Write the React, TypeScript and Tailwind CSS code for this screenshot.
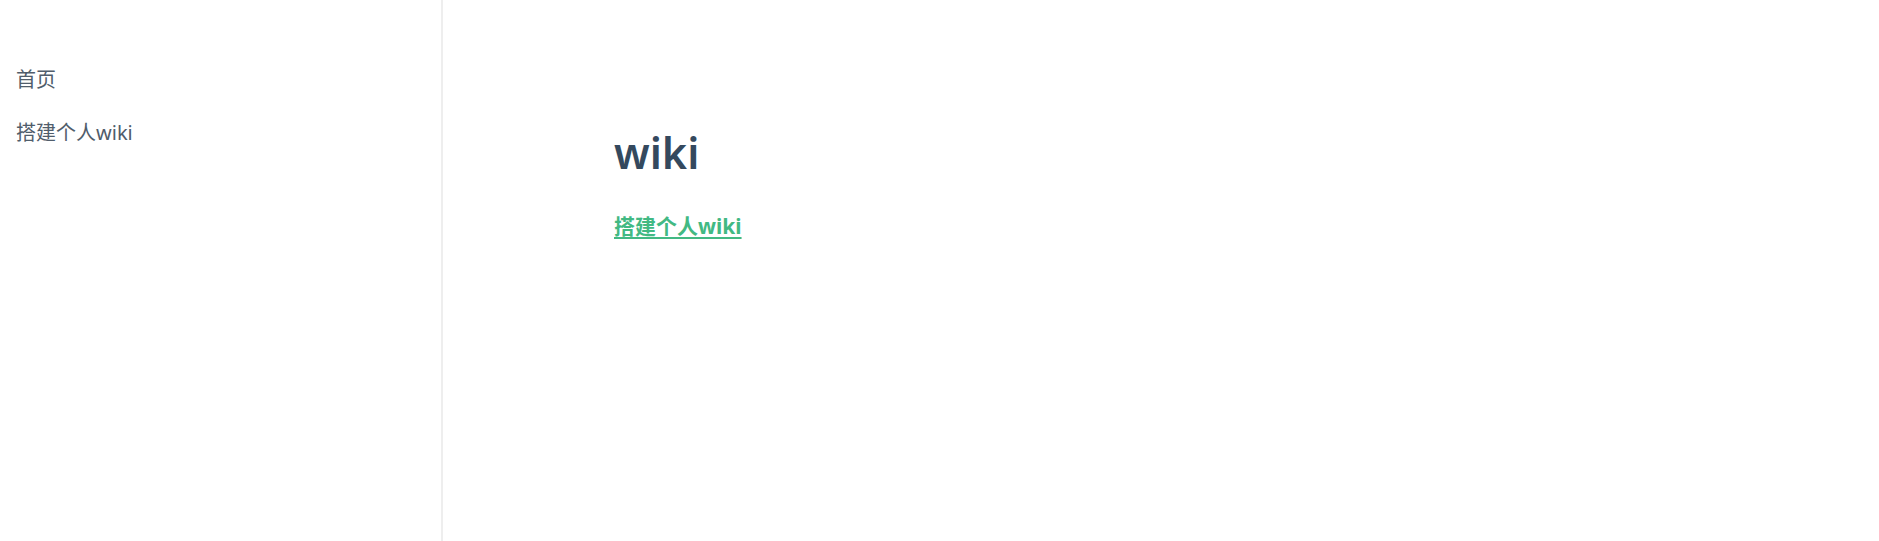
export default function App() {
  const cjk = '"Noto Sans", "Noto Sans CJK SC", sans-serif';
  return (
    <div className="flex h-[541px] w-full bg-white" style={{ fontFamily: cjk }}>
      <aside className="w-[443px] shrink-0 border-r-2 border-[#eeeeee] pt-[65px] pl-[16px]">
        <ul className="flex flex-col gap-[23px] text-[20px] leading-[30px] text-[#505d6b]">
          <li>首页</li>
          <li>搭建个人wiki</li>
        </ul>
      </aside>
      <main className="flex-1 pl-[171px] pt-[123px]">
        <h1 className="text-[43px] font-semibold leading-[60px] text-[#34495e]">wiki</h1>
        <p className="mt-[28px] text-[21px] leading-[30px]">
          <a href="#" className="font-bold text-[#42b983] underline underline-offset-[3px] decoration-2">搭建个人wiki</a>
        </p>
      </main>
    </div>
  );
}
